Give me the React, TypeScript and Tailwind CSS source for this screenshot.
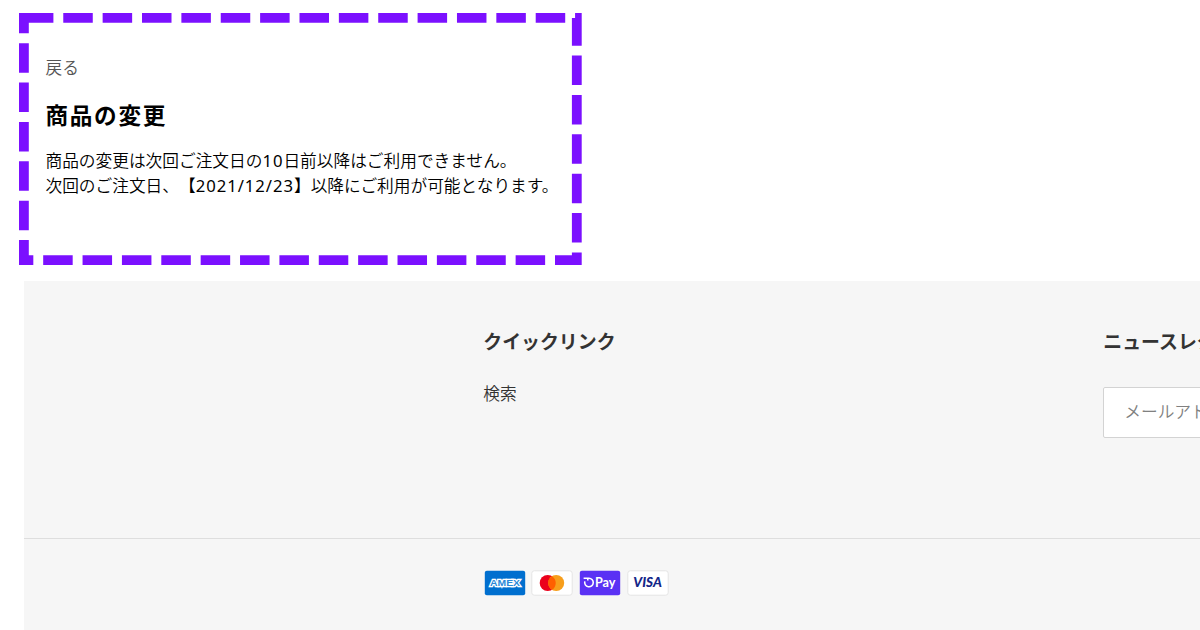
import type { ReactNode } from "react";

const digits = "font-['Noto_Sans','Noto_Sans_CJK_JP',sans-serif] font-normal tracking-[0.95px]";

function Card({ className, children }: { className: string; children: ReactNode }) {
  return (
    <svg viewBox="0 0 42 26" className={`h-[26px] w-[42px] shrink-0 ${className}`}>
      {children}
    </svg>
  );
}

function Payments() {
  return (
    <div className="flex gap-[5.7px]">
      <Card className="text-[#006fcf]">
        <rect x="0.8" y="0.8" width="40.4" height="24.4" rx="2" fill="currentColor" />
        <text
          x="21"
          y="16"
          textAnchor="middle"
          textLength="30"
          lengthAdjust="spacingAndGlyphs"
          fontFamily="Liberation Sans"
          fontSize="8.8"
          fontWeight="700"
          fill="#2b88d8"
          stroke="#fff"
          strokeWidth="2.3"
          paintOrder="stroke"
        >
          AMEX
        </text>
      </Card>
      <Card className="text-[#e4e4e4]">
        <rect x="0.8" y="0.8" width="40.4" height="24.4" rx="2.5" fill="#fff" stroke="currentColor" />
        <circle cx="16.7" cy="13" r="8" fill="#eb001b" />
        <circle cx="25.2" cy="13" r="8" fill="#f79e1b" />
        <path d="M20.95 6.2a8 8 0 0 1 0 13.6a8 8 0 0 1 0-13.6z" fill="#ff5f00" />
      </Card>
      <Card className="text-[#5a31f4]">
        <rect x="0.8" y="0.8" width="40.4" height="24.4" rx="2" fill="currentColor" />
        <path
          d="M4.6 8.2h5.2a4.3 4.3 0 1 1-4 3.2M8.8 8.2v2.4"
          fill="none"
          stroke="#fff"
          strokeWidth="1.6"
        />
        <text x="16" y="16.6" textLength="20.5" fontFamily="Lato" fontSize="12.6" fontWeight="700" fill="#fff">
          Pay
        </text>
      </Card>
      <Card className="text-[#e4e4e4]">
        <rect x="0.8" y="0.8" width="40.4" height="24.4" rx="2.5" fill="#fff" stroke="currentColor" />
        <text
          x="6.3"
          y="17.4"
          textLength="28.5"
          lengthAdjust="spacingAndGlyphs"
          fontFamily="Lato"
          fontSize="12.8"
          fontWeight="900"
          fontStyle="italic"
          fill="#142688"
        >
          VISA
        </text>
      </Card>
    </div>
  );
}

export default function App() {
  return (
    <div className="h-[630px] w-[1200px] overflow-hidden bg-white font-['Noto_Sans_CJK_JP',sans-serif] text-[16.7px] font-[350] [text-spacing-trim:space-all]">
      <main className="relative h-[281px] pt-[54px] pl-[45.5px] whitespace-nowrap text-black">
        <svg className="absolute top-0 left-0 h-[281px] w-[600px]" aria-hidden="true">
          <rect
            x="23.9"
            y="17.9"
            width="552.9"
            height="242.2"
            fill="none"
            stroke="#7b10ff"
            strokeWidth="9.8"
            strokeDasharray="29.5 9.87"
          />
        </svg>
        <a href="#" className="block h-[26px] leading-[26px] text-[#555]">
          戻る
        </a>
        <h1 className="mt-[18px] h-[34px] text-[22.6px] leading-[34px] font-bold tracking-[1.7px]">
          商品の変更
        </h1>
        <p className="mt-4 leading-[25px]">
          商品の変更は次回ご注文日の<span className={digits}>10</span>日前以降はご利用できません。
          <br />
          次回のご注文日、【<span className={digits}>2021/12/23</span>】以降にご利用が可能となります。
        </p>
      </main>

      <footer className="ml-6 h-[349px] bg-[#f6f6f6] text-[#333]">
        <div className="flex h-[258px] border-b border-[#dedede] pt-[45px] pl-[459.3px] whitespace-nowrap">
          <section className="w-[620px] shrink-0">
            <h2 className="text-[18.9px] leading-[30px] font-bold">クイックリンク</h2>
            <a href="#" className="mt-6 block leading-[26px]">
              検索
            </a>
          </section>
          <section className="w-[400px] shrink-0">
            <h2 className="text-[18.9px] leading-[30px] font-bold">ニュースレター</h2>
            <input
              type="email"
              placeholder="メールアドレス"
              className="mt-[31px] block h-[51px] w-full rounded-[2px] border-[1.5px] border-[#d3d3d3] bg-white px-5 pb-[3px] placeholder:text-[#808080]"
            />
          </section>
        </div>
        <div className="pt-[31px] pl-[459.5px]">
          <Payments />
        </div>
      </footer>
    </div>
  );
}
